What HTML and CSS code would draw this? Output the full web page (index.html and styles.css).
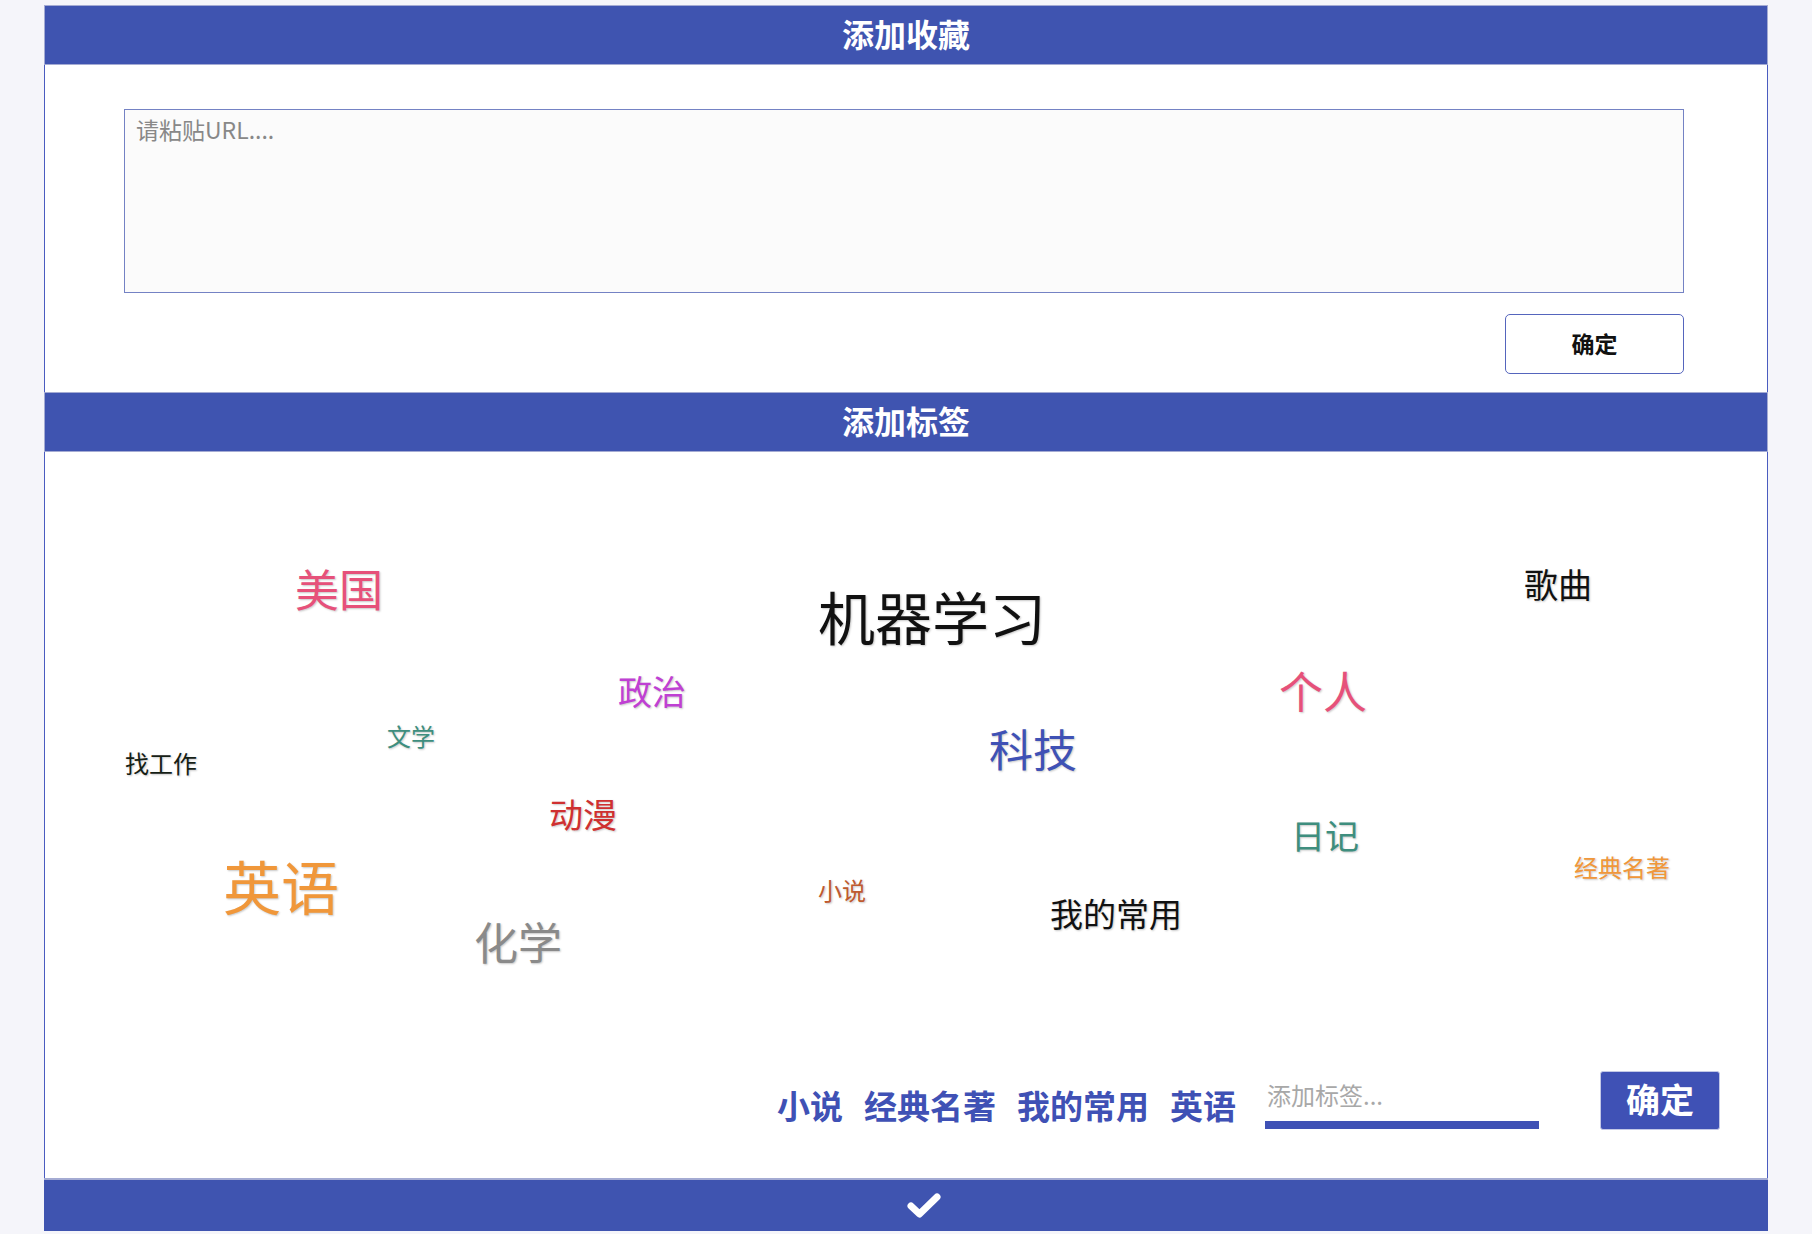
FILE: index.html
```html
<!DOCTYPE html>
<html lang="zh-CN">
<head>
<meta charset="utf-8">
<title>添加收藏</title>
<link rel="stylesheet" href="styles.css">
</head>
<body>
<div class="page">
  <section class="card">
    <div class="card-head">添加收藏</div>
    <div class="card-body url-body">
      <textarea class="url-input" placeholder="请粘贴URL...."></textarea>
      <div class="actions"><button class="btn-outline">确定</button></div>
    </div>
  </section>
  <section class="card">
    <div class="card-head">添加标签</div>
    <div class="card-body tag-body">
      <div class="cloud">
        <span class="word w-meiguo">美国</span>
        <span class="word w-jiqi">机器学习</span>
        <span class="word w-gequ">歌曲</span>
        <span class="word w-zhengzhi">政治</span>
        <span class="word w-geren">个人</span>
        <span class="word w-wenxue">文学</span>
        <span class="word w-zhao">找工作</span>
        <span class="word w-keji">科技</span>
        <span class="word w-dongman">动漫</span>
        <span class="word w-riji">日记</span>
        <span class="word w-yingyu">英语</span>
        <span class="word w-jingdian">经典名著</span>
        <span class="word w-xiaoshuo">小说</span>
        <span class="word w-changyong">我的常用</span>
        <span class="word w-huaxue">化学</span>
      </div>
      <div class="tag-row">
        <span class="sel-tag">小说</span>
        <span class="sel-tag">经典名著</span>
        <span class="sel-tag">我的常用</span>
        <span class="sel-tag">英语</span>
        <input class="tag-input" type="text" placeholder="添加标签...">
        <button class="btn-solid">确定</button>
      </div>
    </div>
  </section>
  <footer class="submit-bar">
    <svg class="check" width="36" height="28" viewBox="0 0 36 28"><polyline points="5,14 13.5,22 31,5" fill="none" stroke="#fff" stroke-width="7" stroke-linecap="round" stroke-linejoin="round"/></svg>
  </footer>
</div>
</body>
</html>
```

FILE: styles.css
```css
* { box-sizing: border-box; }
html, body {
  margin: 0;
  padding: 0;
  background: #f5f5fa;
  font-family: "Noto Sans CJK SC", "Noto Sans", sans-serif;
}
.page {
  width: 1724px;
  margin: 5px auto 0;
}
.card-head {
  height: 60px;
  background: #3f54b0;
  border: 1px solid #a4abd3;
  color: #fff;
  font-size: 32px;
  font-weight: bold;
  line-height: 54px;
  text-align: center;
}
.card-body {
  background: #fff;
  border-left: 1px solid #4a5cc0;
  border-right: 1px solid #4a5cc0;
}
.url-body {
  padding: 44px 83px 18px 79px;
  display: flex;
  flex-direction: column;
}
.url-input {
  display: block;
  width: 100%;
  height: 184px;
  resize: none;
  background: #fbfbfb;
  border: 1px solid #7482c4;
  padding: 2px 11px;
  font-family: inherit;
  font-size: 23px;
  color: #333;
  outline: none;
}
.url-input::placeholder { color: #888; }
.actions {
  display: flex;
  justify-content: flex-end;
  margin-top: 21px;
}
.btn-outline {
  width: 179px;
  height: 60px;
  background: #fff;
  border: 1px solid #5565bd;
  border-radius: 5px;
  font-family: inherit;
  font-size: 23px;
  font-weight: bold;
  color: #111;
  padding: 0 0 3px;
}
.tag-body {
  padding: 0 47px 48px 0;
}
.cloud {
  position: relative;
  height: 619px;
}
.word {
  position: absolute;
  line-height: 1;
  white-space: nowrap;
  text-shadow: 1px 1px 2px rgba(0, 0, 0, 0.22);
}
.w-meiguo { left: 250px; top: 114px; font-size: 44px; color: #e6517a; }
.w-jiqi { left: 773px; top: 135px; font-size: 57px; color: #111; }
.w-gequ { left: 1479px; top: 115px; font-size: 34px; color: #111; }
.w-zhengzhi { left: 573px; top: 222px; font-size: 34px; color: #bf40d3; }
.w-geren { left: 1234px; top: 216px; font-size: 44px; color: #e6517a; }
.w-wenxue { left: 342px; top: 272px; font-size: 24px; color: #3e8e7e; }
.w-zhao { left: 80px; top: 299px; font-size: 24px; color: #152015; }
.w-keji { left: 944px; top: 274px; font-size: 44px; color: #3f51b5; }
.w-dongman { left: 504px; top: 345px; font-size: 34px; color: #cf3030; }
.w-riji { left: 1246px; top: 366px; font-size: 34px; color: #3e8e7e; }
.w-yingyu { left: 178px; top: 404px; font-size: 58px; color: #f0973a; }
.w-jingdian { left: 1529px; top: 403px; font-size: 24px; color: #f0973a; }
.w-xiaoshuo { left: 773px; top: 426px; font-size: 24px; color: #bf5a2f; }
.w-changyong { left: 1005px; top: 445px; font-size: 33px; color: #111; }
.w-huaxue { left: 429px; top: 467px; font-size: 44px; color: #8a8a8a; }

.tag-row {
  display: flex;
  justify-content: flex-end;
  align-items: flex-end;
}
.sel-tag {
  font-size: 33px;
  font-weight: bold;
  line-height: 1;
  color: #3f51b5;
  margin-right: 21px;
  margin-bottom: 8px;
}
.sel-tag:nth-of-type(4) { margin-right: 29px; }
.tag-input {
  width: 274px;
  height: 50px;
  margin-right: 61px;
  margin-bottom: 1px;
  padding: 0 0 11px 2px;
  border: none;
  border-bottom: 8px solid #3f51b5;
  font-family: inherit;
  font-size: 24px;
  color: #333;
  outline: none;
  background: transparent;
}
.tag-input::placeholder { color: #a8a8a8; }
.btn-solid {
  width: 120px;
  height: 59px;
  background: #3f51b5;
  border: 1px solid #c3c8e6;
  border-radius: 3px;
  color: #fff;
  font-family: inherit;
  font-size: 34px;
  font-weight: bold;
  padding: 0 0 5px;
}
.submit-bar {
  height: 53px;
  background: #3f54b0;
  border-top: 2px solid #a4abd3;
  display: flex;
  align-items: center;
  justify-content: center;
  padding-left: 36px;
}
.check { display: block; }
```
